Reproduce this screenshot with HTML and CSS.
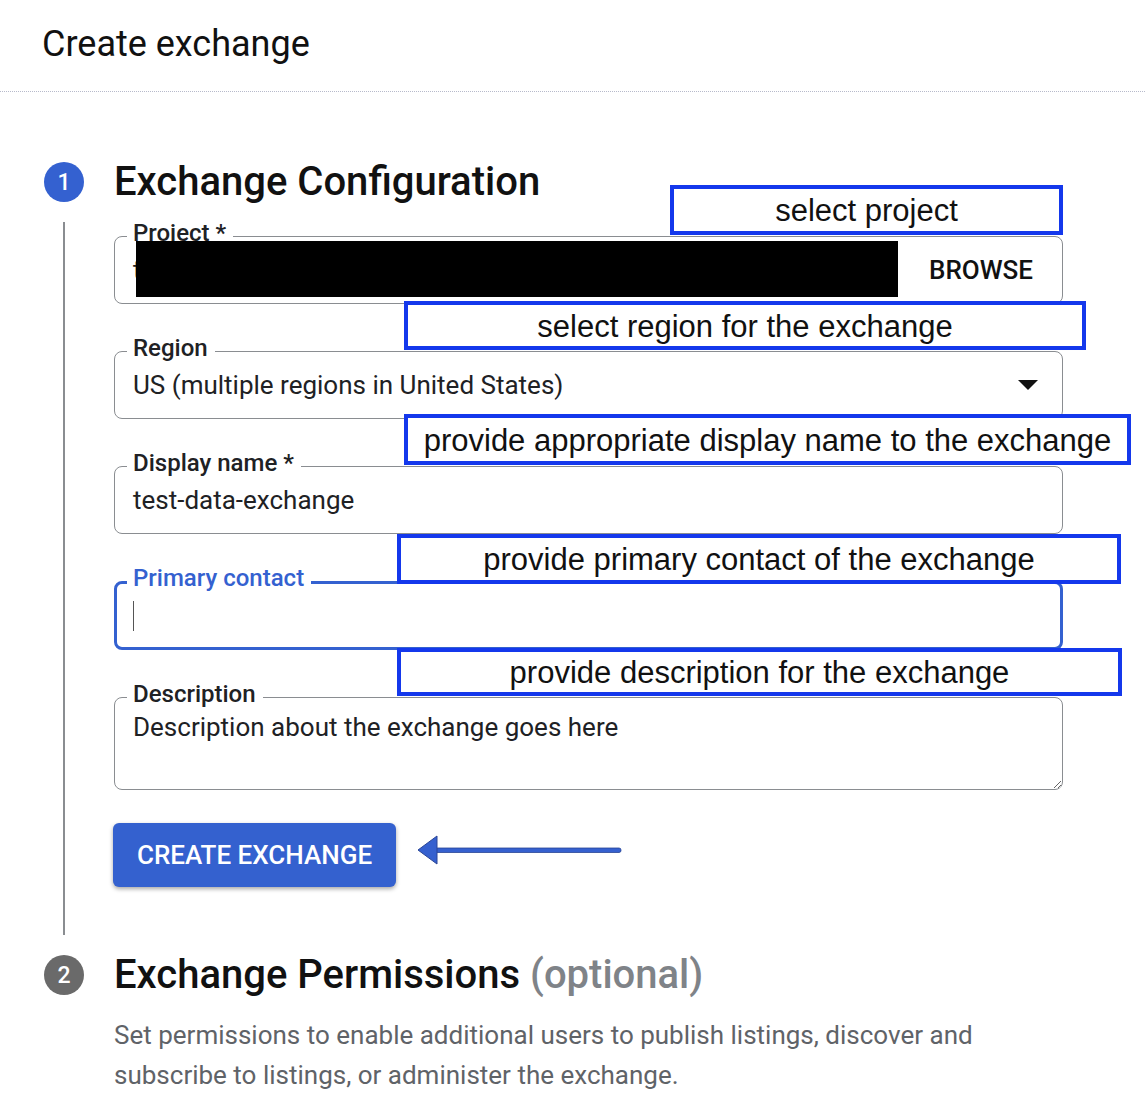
FILE: index.html
```html
<!DOCTYPE html>
<html lang="en">
<head>
<meta charset="utf-8">
<title>Create exchange</title>
<link rel="stylesheet" href="styles.css">
</head>
<body>
<header class="page-header">
  <h1 class="page-title">Create exchange</h1>
</header>
<main class="stepper">
  <section class="step step-first">
    <div class="step-rail">
      <span class="step-num num-active">1</span>
      <span class="step-line"></span>
    </div>
    <div class="step-body body-first">
      <h2 class="step-title">Exchange Configuration</h2>
      <div class="form">
        <div class="field-row">
          <div class="field">
            <span class="field-label">Project *</span>
            <span class="field-value">t</span>
            <span class="redact"></span>
            <span class="browse">BROWSE</span>
          </div>
          <div class="note note-project">select project</div>
        </div>
        <div class="field-row">
          <div class="field">
            <span class="field-label">Region</span>
            <span class="field-value">US (multiple regions in United States)</span>
            <span class="caret-down"></span>
          </div>
          <div class="note note-region">select region for the exchange</div>
        </div>
        <div class="field-row">
          <div class="field">
            <span class="field-label">Display name *</span>
            <span class="field-value">test-data-exchange</span>
          </div>
          <div class="note note-display">provide appropriate display name to the exchange</div>
        </div>
        <div class="field-row">
          <div class="field field-focused">
            <span class="field-label label-focused">Primary contact</span>
            <span class="text-cursor"></span>
          </div>
          <div class="note note-contact">provide primary contact of the exchange</div>
        </div>
        <div class="field-row">
          <div class="field field-area">
            <span class="field-label">Description</span>
            <textarea class="area-input">Description about the exchange goes here</textarea>
          </div>
          <div class="note note-desc">provide description for the exchange</div>
        </div>
      </div>
      <div class="actions">
        <button class="btn-primary">CREATE EXCHANGE</button>
        <svg class="arrow" width="206" height="32" viewBox="0 0 206 32">
          <rect x="18" y="14" width="186" height="4.5" rx="2" fill="#3560cf" stroke="#2a4596" stroke-width="0.8"/>
          <polygon points="1,16 20,2 20,30" fill="#3560cf" stroke="#2a4596" stroke-width="1"/>
        </svg>
      </div>
    </div>
  </section>
  <section class="step">
    <div class="step-rail">
      <span class="step-num num-idle">2</span>
    </div>
    <div class="step-body">
      <h2 class="step-title">Exchange Permissions <span class="optional">(optional)</span></h2>
      <p class="step-desc">Set permissions to enable additional users to publish listings, discover and subscribe to listings, or administer the exchange.</p>
    </div>
  </section>
</main>
</body>
</html>
```

FILE: styles.css
```css
* { box-sizing: border-box; }

body {
  margin: 0;
  background: #fff;
  color: #202124;
  font-family: Roboto, "Noto Sans", Arial, sans-serif;
}

.page-header {
  height: 92px;
  border-bottom: 1px dotted #b7bacb;
  padding: 0 0 4px 42px;
  display: flex;
  align-items: center;
}

.page-title {
  margin: 0;
  font-size: 36px;
  font-weight: 400;
  color: #111;
}

.stepper {
  padding: 70px 0 0 44px;
}

.step {
  display: grid;
  grid-template-columns: 40px 1fr;
  column-gap: 30px;
}

.body-first {
  padding-bottom: 48px;
}

.step + .step {
  margin-top: 20px;
}

.step-rail {
  display: flex;
  flex-direction: column;
  align-items: center;
}

.step-num {
  width: 40px;
  height: 40px;
  border-radius: 50%;
  display: flex;
  align-items: center;
  justify-content: center;
  color: #fff;
  font-size: 23px;
  font-weight: 500;
}

.num-active { background: #3461d0; }
.num-idle { background: #6a6a6a; }

.step-line {
  flex: 1;
  width: 2px;
  margin-top: 20px;
  background: #8a8d91;
}

.step-title {
  margin: 0;
  height: 40px;
  line-height: 40px;
  font-size: 40px;
  font-weight: 500;
  color: #111;
}

.optional {
  color: #7f8388;
}

.form {
  margin-top: 34px;
  width: 949px;
  display: flex;
  flex-direction: column;
  gap: 47px;
}

.field-row {
  position: relative;
}

.field {
  position: relative;
  height: 68px;
  border: 1px solid #8a8d91;
  border-radius: 8px;
  padding: 0 29px 0 18px;
  display: flex;
  align-items: center;
}

.field-label {
  position: absolute;
  top: -18px;
  left: 12px;
  padding: 0 7px 0 6px;
  background: #fff;
  font-size: 24px;
  line-height: 28px;
  font-weight: 500;
  color: #202124;
}

.field-value {
  font-size: 26px;
  color: #202124;
  flex: 1;
}

.redact {
  position: absolute;
  left: 21px;
  top: 4px;
  width: 762px;
  height: 56px;
  background: #000;
}

.browse {
  font-size: 26px;
  font-weight: 500;
  color: #111;
}

.caret-down {
  width: 0;
  height: 0;
  margin-right: -5px;
  border-left: 10px solid transparent;
  border-right: 10px solid transparent;
  border-top: 10px solid #111;
}

.field-focused {
  height: 69px;
  border: 3px solid #3461d0;
  padding-left: 16px;
}

.label-focused {
  left: 10px;
  top: -20px;
  color: #3461d0;
}

.text-cursor {
  width: 1px;
  height: 30px;
  background: #555;
}

.field-area {
  height: 93px;
  padding: 0;
  align-items: stretch;
}

.area-input {
  width: 100%;
  height: 100%;
  border: none;
  border-radius: 8px;
  padding: 14px 18px 0;
  font-family: Roboto, "Noto Sans", Arial, sans-serif;
  font-size: 26px;
  line-height: 30px;
  color: #202124;
  background: transparent;
  resize: vertical;
  outline: none;
}

.note {
  position: absolute;
  border: 4px solid #1438ec;
  background: #fff;
  display: flex;
  align-items: center;
  justify-content: center;
  padding-top: 2px;
  font-family: "Liberation Sans", Arial, sans-serif;
  font-size: 31px;
  color: #111;
  white-space: nowrap;
}

.note-project { left: 556px; top: -51px; width: 393px; height: 50px; }
.note-region { left: 290px; top: -50px; width: 682px; height: 49px; }
.note-display { left: 290px; top: -52px; width: 727px; height: 51px; }
.note-contact { left: 283px; top: -47px; width: 724px; height: 50px; }
.note-desc { left: 283px; top: -49px; width: 725px; height: 48px; }

.actions {
  margin-top: 33px;
  display: flex;
  align-items: center;
  gap: 21px;
}

.btn-primary {
  width: 283px;
  height: 64px;
  margin-left: -1px;
  border: none;
  border-radius: 6px;
  background: #3461cf;
  color: #fff;
  font-family: Roboto, "Noto Sans", Arial, sans-serif;
  font-size: 26px;
  font-weight: 500;
  box-shadow: 0 2px 4px rgba(0, 0, 0, 0.35);
}

.arrow {
  margin-bottom: 10px;
}

.step-desc {
  margin: 20px 0 0;
  max-width: 880px;
  font-size: 26px;
  line-height: 40px;
  color: #5f6368;
}
```
